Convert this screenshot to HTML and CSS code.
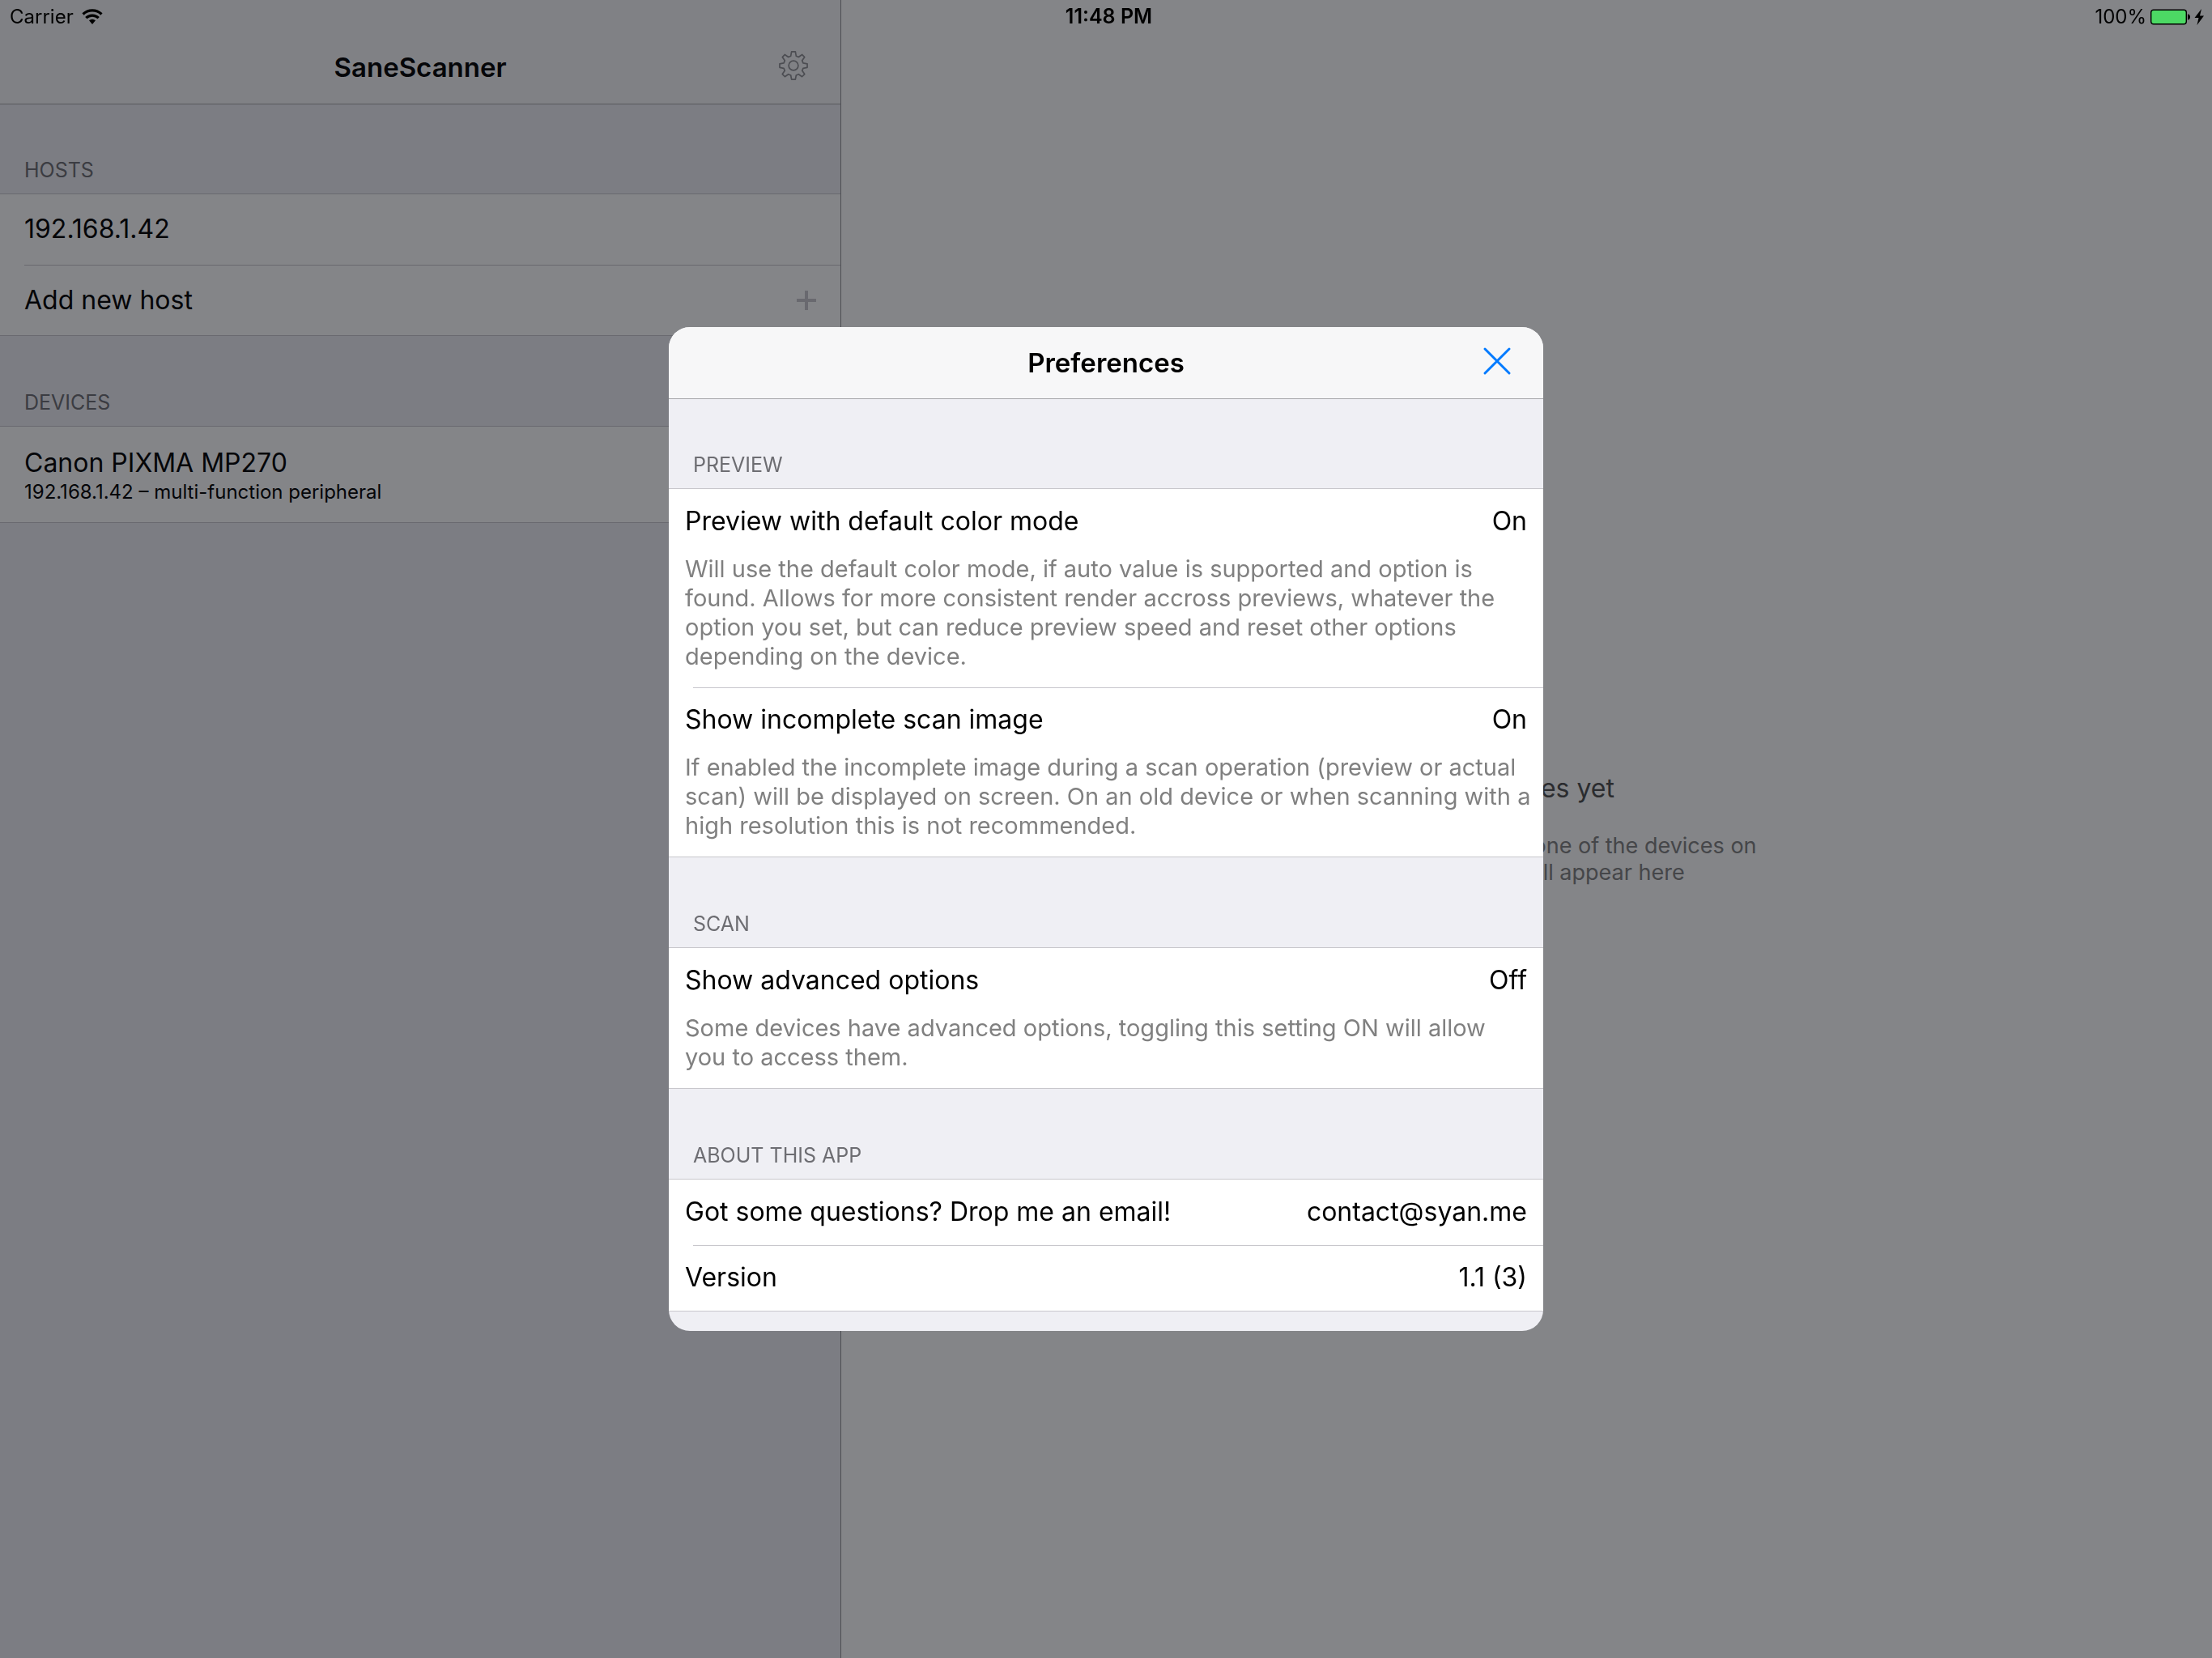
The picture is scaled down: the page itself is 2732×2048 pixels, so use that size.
FILE: index.html
```html
<!DOCTYPE html>
<html lang="en">
<head>
<meta charset="utf-8">
<meta name="viewport" content="width=device-width, initial-scale=1">
<title>SaneScanner</title>
<link rel="stylesheet" href="styles.css">
</head>
<body>
<div class="app">
  <aside class="sidebar">
    <header class="sidebar-bar">
      <h1 class="bar-title">SaneScanner</h1>
      <button class="icon-button gear-button" type="button" aria-label="Preferences">
        <svg class="gear" viewBox="0 0 38 38" fill="none" stroke="currentColor" stroke-width="1.8" stroke-linejoin="round"><path d="M16.500 1h5l1 5.500 3.200 1.400 4.500-3.200 3.300 3.300-3.200 4.500 1.300 3.200 5.400 1v4.800l-5.400 1-1.300 3.200 3.200 4.500-3.300 3.300-4.500-3.200-3.200 1.400-1 5.300h-5l-1-5.300-3.200-1.400-4.500 3.200-3.300-3.300 3.200-4.500-1.300-3.200-5.400-1v-4.800l5.400-1 1.300-3.200-3.200-4.500 3.300-3.300 4.500 3.200 3.200-1.400z"/><circle cx="19" cy="19" r="6.200"/></svg>
      </button>
    </header>
    <h2 class="section-title">HOSTS</h2>
    <ul class="list">
      <li class="host">192.168.1.42</li>
      <li class="host">Add new host
        <svg class="plus" viewBox="0 0 24 24" stroke="currentColor" stroke-width="4"><path d="M12 0v24M0 12h24"/></svg>
      </li>
    </ul>
    <h2 class="section-title">DEVICES</h2>
    <ul class="list">
      <li class="device"><span>Canon PIXMA MP270</span><small class="device-detail">192.168.1.42 – multi-function peripheral</small></li>
    </ul>
  </aside>
  <main class="content">
    <h2 class="empty-title">No images yet</h2>
    <p class="empty-text">Start by scanning with one of the devices on<br>the left, scans will appear here</p>
  </main>
</div>
<div class="shade"></div>
<div class="status">
  <div class="status-side">Carrier
    <svg class="wifi" viewBox="0 0 26 20"><g fill="none" stroke="currentColor" stroke-width="3.200"><path d="M1.500 6.500a16.500 16.500 0 0 1 23 0"/><path d="M5.300 11.200a11 11 0 0 1 15.400 0"/></g><path d="M9 14.300a6 6 0 0 1 8 0L13 19z" fill="currentColor"/></svg>
  </div>
  <time class="clock">11:48 PM</time>
  <div class="status-side status-right">100%
    <svg class="battery" viewBox="0 0 66 20"><rect x="0.700" y="1.200" width="43.600" height="17.600" rx="3" fill="#4cd964" stroke="#000" stroke-width="1.400"/><path d="M46 6.500c4 0 4 7 0 7z"/><path d="M63 0 54.500 11h5l-2 9L66 8.500h-5z"/></svg>
  </div>
</div>
<div class="overlay">
  <section class="sheet" role="dialog" aria-labelledby="sheet-title">
    <header class="sheet-bar">
      <h2 class="bar-title" id="sheet-title">Preferences</h2>
      <button class="icon-button close-button" type="button" aria-label="Close">
        <svg class="close" viewBox="0 0 34 34" stroke="currentColor" stroke-width="3" stroke-linecap="round"><path d="M2 2l30 30M32 2L2 32"/></svg>
      </button>
    </header>
    <div class="sheet-body">
      <h3 class="section-title">PREVIEW</h3>
      <ul class="list">
        <li class="pref">
          <div class="pref-line"><span>Preview with default color mode</span><span>On</span></div>
          <p class="pref-text">Will use the default color mode, if auto value is supported and option is found. Allows for more consistent render accross previews, whatever the option you set, but can reduce preview speed and reset other options depending on the device.</p>
        </li>
        <li class="pref">
          <div class="pref-line"><span>Show incomplete scan image</span><span>On</span></div>
          <p class="pref-text">If enabled the incomplete image during a scan operation (preview or actual scan) will be displayed on screen. On an old device or when scanning with a high resolution this is not recommended.</p>
        </li>
      </ul>
      <h3 class="section-title">SCAN</h3>
      <ul class="list">
        <li class="pref">
          <div class="pref-line"><span>Show advanced options</span><span>Off</span></div>
          <p class="pref-text">Some devices have advanced options, toggling this setting ON will allow you to access them.</p>
        </li>
      </ul>
      <h3 class="section-title">ABOUT THIS APP</h3>
      <ul class="list">
        <li class="pref"><div class="pref-line"><span>Got some questions? Drop me an email!</span><span>contact@syan.me</span></div></li>
        <li class="pref"><div class="pref-line"><span>Version</span><span>1.1 (3)</span></div></li>
      </ul>
    </div>
  </section>
</div>
</body>
</html>
```
FILE: styles.css
```css
* { box-sizing: border-box; }
body {
  margin: 0;
  font: 32px/40px Inter, "Liberation Sans", sans-serif;
  color: #000;
}
h1, h2, h3, p, ul { margin: 0; padding: 0; font-weight: 400; }
ul { list-style: none; }
svg { display: block; flex: none; overflow: visible; }

.app { display: flex; min-height: 100vh; background: #fff; }
.sidebar {
  width: calc(38% + 1px);
  flex: none;
  border-right: 1px solid #8e8e93;
  background: #efeff4;
}
.sidebar-bar, .sheet-bar {
  display: grid;
  grid-template-columns: 1fr auto 1fr;
  align-items: center;
  background: #f7f7f8;
  border-bottom: 1px solid #a7a7aa;
}
.sidebar-bar { height: 129px; padding: 38px 40px 0; }
.sheet-bar { height: 89px; padding: 0 40px; }
.bar-title { grid-column: 2; font-size: 33px; font-weight: 600; }
.icon-button {
  justify-self: end;
  padding: 0 0 4px;
  border: 0;
  background: none;
}
.gear-button { color: #8e8e93; }
.gear { width: 36px; height: 36px; }
.close-button { color: #007aff; }
.close { width: 34px; height: 34px; }

.section-title {
  height: 110px;
  padding: 61px 30px 0;
  font-size: 25px;
  color: #6d6d72;
}
.list + .section-title { height: 111px; padding-top: 62px; }
.list { background: #fff; border: solid #c8c7cc; border-width: 1px 0; }
.host {
  display: flex;
  align-items: center;
  justify-content: space-between;
  height: 87px;
  padding: 0 30px 1px 0;
  margin-left: 30px;
}
.host + .host { border-top: 1px solid #c8c7cc; }
.plus { width: 24px; height: 24px; color: #c8c7cc; }
.device { display: flex; flex-direction: column; padding: 25px 30px 21px; }
.device-detail { font-size: 24px; line-height: 32px; }

.content {
  flex: 1;
  display: flex;
  flex-direction: column;
  align-items: center;
  justify-content: center;
  text-align: center;
}
.empty-title { font-size: 32px; color: #4d4d4d; }
.empty-text { margin-top: 34px; font-size: 27px; line-height: 33px; color: #808080; }

.shade { position: fixed; inset: 0; background: rgba(10, 12, 18, .5); }

.status {
  position: fixed;
  inset: 0 0 auto;
  display: grid;
  grid-template-columns: 1fr auto 1fr;
  padding: 0 10px 0 12px;
  font-size: 24px;
  line-height: 41px;
}
.status-side { display: flex; align-items: center; gap: 10px; }
.status-right { justify-content: flex-end; gap: 5px; }
.clock { padding-left: 5px; font-size: 25px; font-weight: 600; }
.wifi { width: 26px; height: 20px; }
.battery { width: 66px; height: 20px; }

.overlay {
  position: fixed;
  inset: 0;
  display: flex;
  align-items: center;
  justify-content: center;
}
.sheet {
  width: 1080px;
  height: 1240px;
  overflow: hidden;
  border-radius: 26px;
  background: #efeff4;
}
.pref { padding: 20px 0 0 20px; }
.pref-line { display: flex; justify-content: space-between; padding: 0 20px 21px 0; }
.pref-text {
  padding: 0 14px 20px 0;
  font-size: 29px;
  line-height: 36px;
  color: #808080;
}
.pref + .pref {
  background: linear-gradient(#c8c7cc, #c8c7cc) 30px 0 / 100% 1px no-repeat;
}
```
